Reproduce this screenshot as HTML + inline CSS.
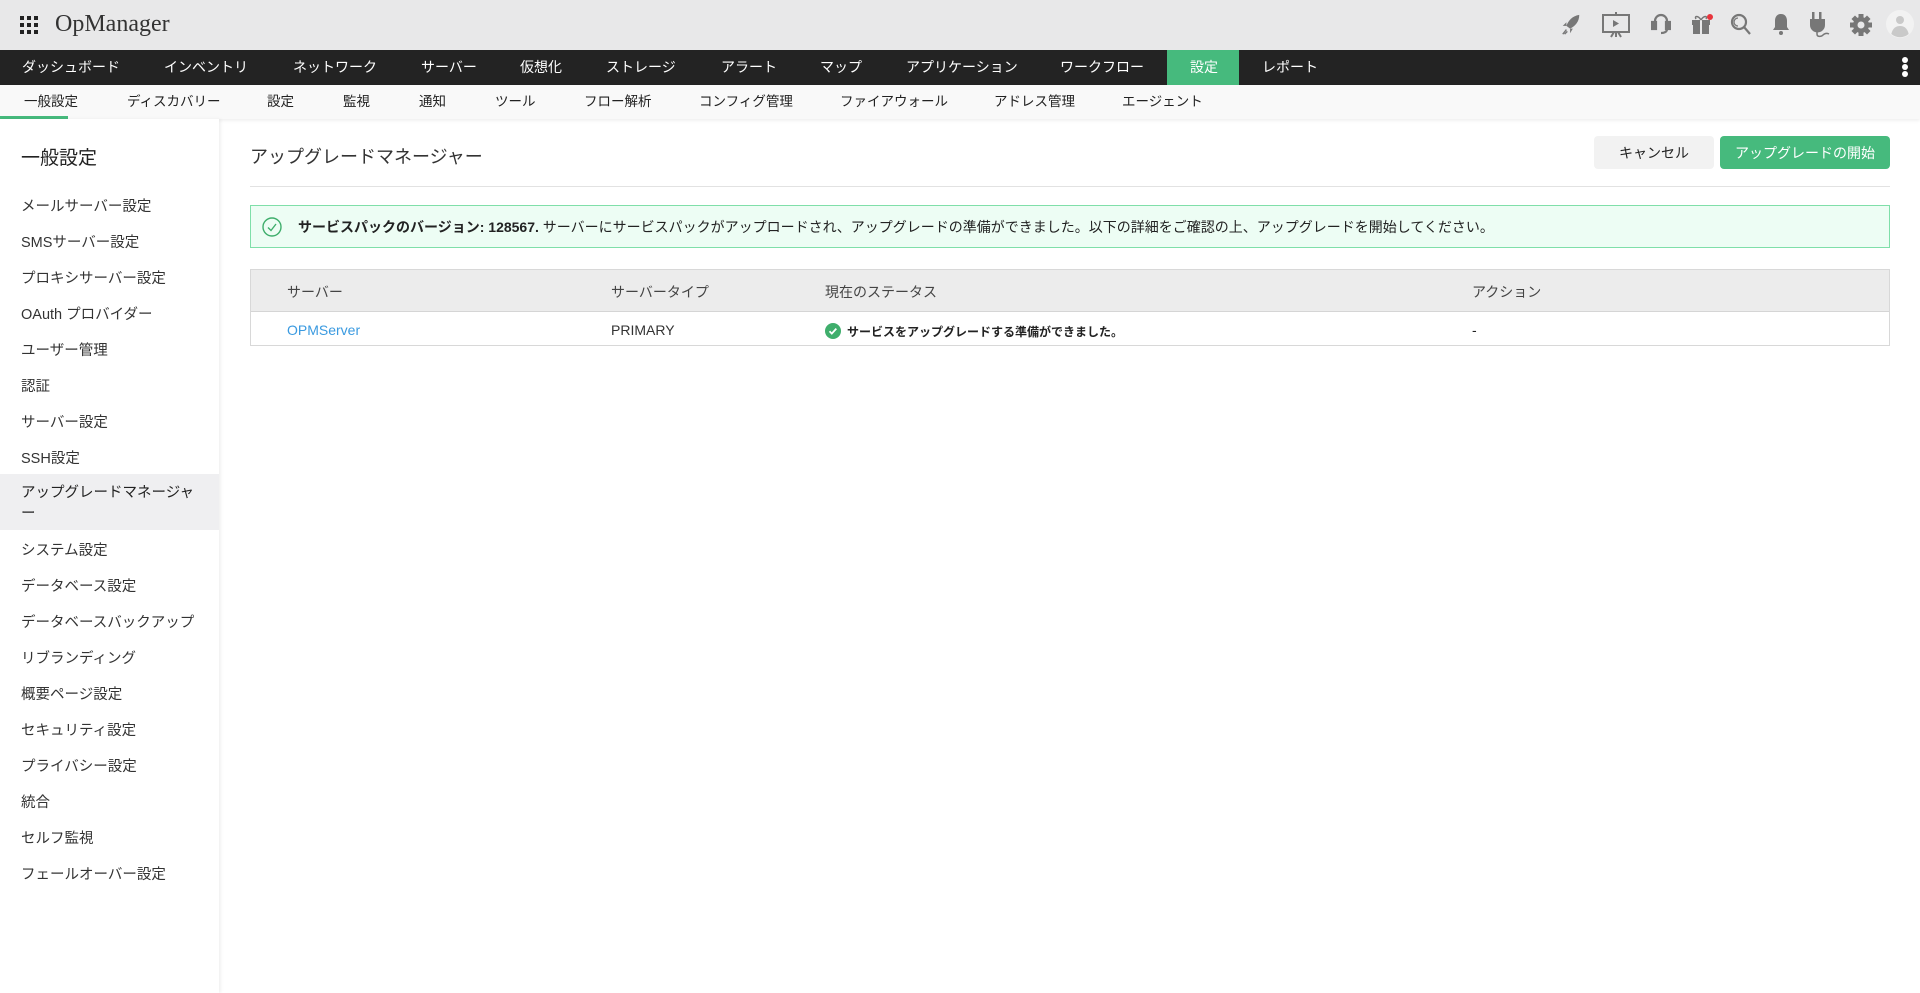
<!DOCTYPE html>
<html><head><meta charset="utf-8"><style>
*{margin:0;padding:0;box-sizing:border-box}
body{width:1920px;height:993px;overflow:hidden;background:#fff;font-family:"Liberation Sans","Noto Sans CJK JP",sans-serif;color:#222;position:relative}
.top{position:absolute;left:0;top:0;width:1920px;height:50px;background:#e8e8e9}
.logo{position:absolute;left:55px;top:11px;font-family:"Liberation Serif","Noto Serif CJK SC",serif;font-size:24px;color:#333}
.grid{position:absolute;left:20px;top:16px;width:18px;height:18px}
.nav{position:absolute;top:50px;left:0;width:1920px;height:35px;background:#232323}
.nav span{position:absolute;top:0;line-height:35px;color:#fff;font-size:14px}
.sub{position:absolute;top:85px;left:0;width:1920px;height:34px;background:#f9f9f9;box-shadow:0 2px 3px rgba(0,0,0,.06)}
.sub span{position:absolute;line-height:33px;font-size:13.5px;color:#222}
.side{position:absolute;left:0;top:119px;width:219px;height:874px;background:#fff;box-shadow:2px 0 3px rgba(0,0,0,.06)}
.side div{position:absolute;left:21px;font-size:14.5px;color:#333}
.ic{position:absolute;top:12px}
</style></head><body>
<div class="top">
<svg class="grid" viewBox="0 0 18 18" fill="#222"><rect x="0" y="0" width="4" height="4"/><rect x="7" y="0" width="4" height="4"/><rect x="14" y="0" width="4" height="4"/><rect x="0" y="7" width="4" height="4"/><rect x="7" y="7" width="4" height="4"/><rect x="14" y="7" width="4" height="4"/><rect x="0" y="14" width="4" height="4"/><rect x="7" y="14" width="4" height="4"/><rect x="14" y="14" width="4" height="4"/></svg>
<div class="logo">OpManager</div>
<svg class="ic" style="left:1560px;top:14px" width="22" height="22" viewBox="0 0 22 24" fill="#777"><path d="M20 1 C13 2 8 7 6 13 L10 16 C16 13 20 8 20 1Z"/><path d="M6 13 L2 13 L6 9Z M10 16 L10 21 L13 16Z"/><path d="M2 22 L6 17 M4 22 L7 19" stroke="#777" stroke-width="1.5"/></svg>
<svg class="ic" style="left:1602px" width="28" height="26" viewBox="0 0 28 26" fill="none" stroke="#777" stroke-width="2"><rect x="1" y="3" width="26" height="17"/><path d="M14 0v3M14 20v5M9 25l3-5M19 25l-3-5"/><path d="M11 8l6 3.5-6 3.5z" fill="#777" stroke="none"/></svg>
<svg class="ic" style="left:1651px" width="20" height="24" viewBox="0 0 20 24" fill="none" stroke="#777" stroke-width="2.2"><path d="M4 12V9a6 6 0 0 1 12 0v3"/><rect x="1" y="10" width="4" height="7" fill="#777"/><rect x="15" y="10" width="4" height="7" fill="#777"/><path d="M16 17c0 3-3 4-6 4"/></svg>
<svg class="ic" style="left:1690px" width="24" height="24" viewBox="0 0 24 24" fill="#777"><rect x="2" y="8" width="18" height="5"/><rect x="3" y="13" width="16" height="9"/><rect x="10" y="8" width="2" height="14" fill="#e8e8e9"/><path d="M11 8c-3-5-7-4-5-1M11 8c3-5 7-4 5-1" stroke="#777" fill="none" stroke-width="1.5"/><circle cx="20" cy="5" r="3" fill="#e8343c"/></svg>
<svg class="ic" style="left:1730px" width="22" height="24" viewBox="0 0 22 24" fill="none" stroke="#777" stroke-width="2.2"><circle cx="9" cy="10" r="7"/><path d="M14 15l6 7"/><path d="M8 6a4 4 0 0 0 0 8" stroke-width="1.3"/></svg>
<svg class="ic" style="left:1772px" width="18" height="24" viewBox="0 0 18 24" fill="#777"><path d="M9 2c4 0 6 3 6 7v6l2 3H1l2-3V9c0-4 2-7 6-7z"/><circle cx="9" cy="21" r="2"/></svg>
<svg class="ic" style="left:1807px" width="24" height="26" viewBox="0 0 24 26" fill="#777"><rect x="5" y="0" width="2.5" height="7"/><rect x="12" y="0" width="2.5" height="7"/><path d="M3 7h15v6a7 7 0 0 1-15 0z"/><path d="M10 19v3c0 3 4 3 6 1s4-2 6-1" stroke="#777" stroke-width="1.5" fill="none"/></svg>
<svg class="ic" style="left:1850px;top:14px" width="22" height="22" viewBox="0 0 22 22"><g fill="#777" transform="translate(11 11)"><rect x="-2.5" y="-11" width="5" height="22"/><rect x="-2.5" y="-11" width="5" height="22" transform="rotate(45)"/><rect x="-2.5" y="-11" width="5" height="22" transform="rotate(90)"/><rect x="-2.5" y="-11" width="5" height="22" transform="rotate(135)"/><circle r="8"/><circle r="3.5" fill="#e8e8e9"/></g></svg>
<svg style="position:absolute;left:1886px;top:10px" width="28" height="28" viewBox="0 0 42 42"><circle cx="21" cy="21" r="21" fill="#f2f2f2"/><circle cx="21" cy="15" r="6" fill="#c9c9c9"/><path d="M8 36c2-9 7-12 13-12s11 3 13 12a20 20 0 0 1-26 0z" fill="#c9c9c9"/></svg>
</div>
<div class="nav">
<span style="left:22px">ダッシュボード</span><span style="left:164px">インベントリ</span><span style="left:293px">ネットワーク</span><span style="left:421px">サーバー</span><span style="left:520px">仮想化</span><span style="left:606px">ストレージ</span><span style="left:721px">アラート</span><span style="left:820px">マップ</span><span style="left:906px">アプリケーション</span><span style="left:1060px">ワークフロー</span>
<div style="position:absolute;left:1167px;top:0;width:72px;height:35px;background:#46ba7d"></div><span style="left:1190px">設定</span><span style="left:1262px">レポート</span>
<svg style="position:absolute;left:1901px;top:6px" width="8" height="24" viewBox="0 0 8 24" fill="#fff"><circle cx="4" cy="4" r="3"/><circle cx="4" cy="11" r="3"/><circle cx="4" cy="18" r="3"/></svg>
</div>
<div class="sub">
<span style="left:24px">一般設定</span><span style="left:127px">ディスカバリー</span><span style="left:267px">設定</span><span style="left:343px">監視</span><span style="left:419px">通知</span><span style="left:495px">ツール</span><span style="left:584px">フロー解析</span><span style="left:699px">コンフィグ管理</span><span style="left:840px">ファイアウォール</span><span style="left:994px">アドレス管理</span><span style="left:1122px">エージェント</span>
<div style="position:absolute;left:0;top:31px;width:68px;height:3px;background:#46ba7d"></div>
</div>
<div class="side">
<div style="top:24px;font-size:19px;color:#222">一般設定</div>
<div style="top:76px">メールサーバー設定</div>
<div style="top:112px">SMSサーバー設定</div>
<div style="top:148px">プロキシサーバー設定</div>
<div style="top:184px">OAuth プロバイダー</div>
<div style="top:220px">ユーザー管理</div>
<div style="top:256px">認証</div>
<div style="top:292px">サーバー設定</div>
<div style="top:328px">SSH設定</div>
<div style="top:355px;left:0;width:219px;height:56px;background:#efeff1"></div>
<div style="top:364px;line-height:21px;color:#222">アップグレードマネージャ<br>ー</div>
<div style="top:420px">システム設定</div>
<div style="top:456px">データベース設定</div>
<div style="top:492px">データベースバックアップ</div>
<div style="top:528px">リブランディング</div>
<div style="top:564px">概要ページ設定</div>
<div style="top:600px">セキュリティ設定</div>
<div style="top:636px">プライバシー設定</div>
<div style="top:672px">統合</div>
<div style="top:708px">セルフ監視</div>
<div style="top:744px">フェールオーバー設定</div>
</div>
<div style="position:absolute;left:250px;top:143px;font-size:18px;color:#333">アップグレードマネージャー</div>
<div style="position:absolute;left:1594px;top:136px;width:120px;height:33px;background:#f2f2f2;border-radius:4px;font-size:14px;line-height:34px;text-align:center;color:#222">キャンセル</div>
<div style="position:absolute;left:1720px;top:136px;width:170px;height:33px;background:#46ba7d;border-radius:4px;font-size:14px;line-height:34px;text-align:center;color:#fff">アップグレードの開始</div>
<div style="position:absolute;left:250px;top:186px;width:1640px;height:1px;background:#e2e2e2"></div>
<div style="position:absolute;left:250px;top:205px;width:1640px;height:43px;background:#edfdf4;border:1px solid #7fdfa9;font-size:14px;line-height:42px;padding-left:47px">
<svg style="position:absolute;left:11px;top:11px" width="20" height="20" viewBox="0 0 20 20" fill="none" stroke="#3fae6c" stroke-width="1.4"><circle cx="10" cy="10" r="9"/><path d="M6 10.5l3 3 5-6.5"/></svg>
<b>サービスパックのバージョン:</b> <b>128567.</b> サーバーにサービスパックがアップロードされ、アップグレードの準備ができました。以下の詳細をご確認の上、アップグレードを開始してください。</div>
<div style="position:absolute;left:250px;top:269px;width:1640px;height:77px;border:1px solid #d8d8d8;font-size:14px">
<div style="position:absolute;left:0;top:0;width:1638px;height:42px;background:#ececec;border-bottom:1px solid #d5d5d5"></div>
<span style="position:absolute;left:36px;top:12px;color:#444">サーバー</span>
<span style="position:absolute;left:360px;top:12px;color:#444">サーバータイプ</span>
<span style="position:absolute;left:574px;top:12px;color:#444">現在のステータス</span>
<span style="position:absolute;left:1221px;top:12px;color:#444">アクション</span>
<span style="position:absolute;left:36px;top:52px;color:#3a9ae0">OPMServer</span>
<span style="position:absolute;left:360px;top:52px;color:#333">PRIMARY</span>
<svg style="position:absolute;left:574px;top:53px" width="16" height="16" viewBox="0 0 16 16"><circle cx="8" cy="8" r="8" fill="#3fae6c"/><path d="M4.5 8.3l2.3 2.3 4.5-5" stroke="#fff" stroke-width="1.8" fill="none"/></svg>
<span style="position:absolute;left:596px;top:53px;font-size:12px;font-weight:bold;color:#222">サービスをアップグレードする準備ができました。</span>
<span style="position:absolute;left:1221px;top:52px">-</span>
</div>
</body></html>
